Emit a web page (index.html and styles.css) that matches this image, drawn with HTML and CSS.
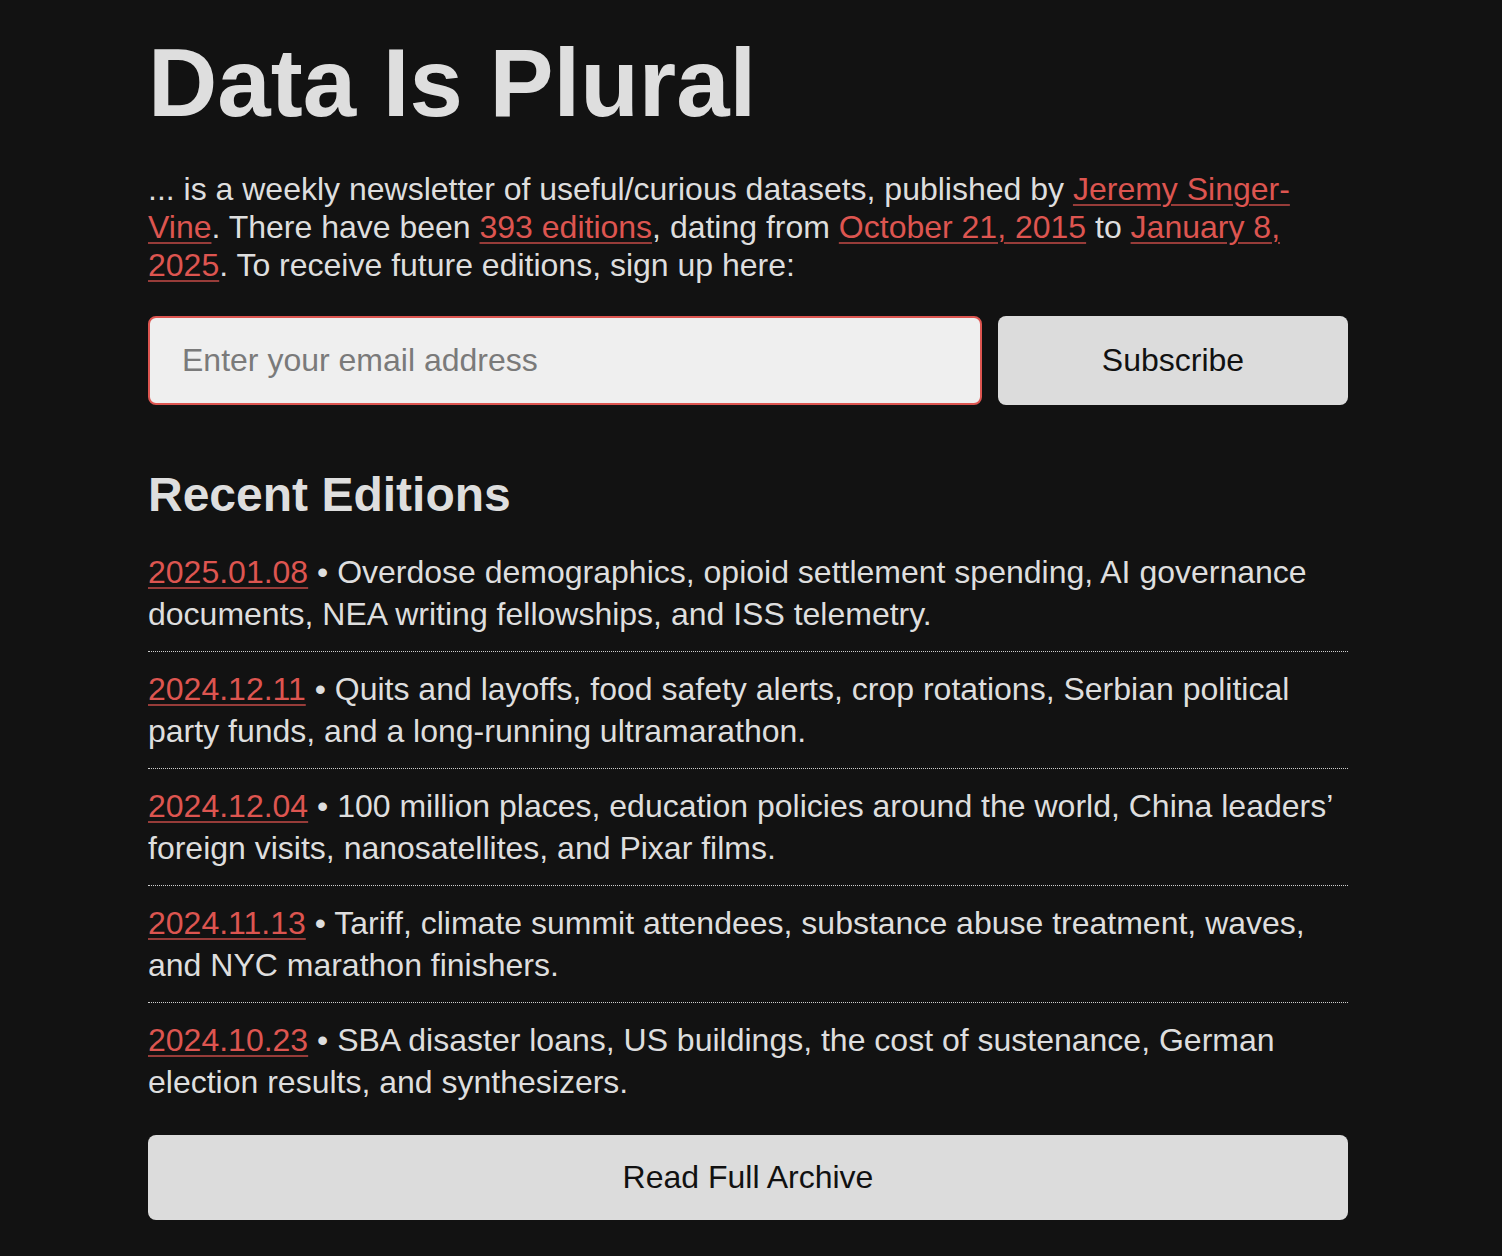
FILE: index.html
```html
<!DOCTYPE html>
<html lang="en">
<head>
<meta charset="utf-8">
<title>Data Is Plural</title>
<link rel="stylesheet" href="styles.css">
</head>
<body>
<main class="page">
  <h1 class="title">Data Is Plural</h1>
  <p class="intro">... is a weekly newsletter of useful/curious datasets, published by <a href="#">Jeremy Singer-Vine</a>. There have been <a href="#">393 editions</a>, dating from <a href="#">October 21, 2015</a> to <a href="#">January 8, 2025</a>. To receive future editions, sign up here:</p>
  <form class="signup">
    <input class="email" type="email" placeholder="Enter your email address">
    <button class="btn subscribe" type="button">Subscribe</button>
  </form>
  <h2 class="section-title">Recent Editions</h2>
  <ul class="editions">
    <li class="edition"><a href="#">2025.01.08</a> • Overdose demographics, opioid settlement spending, AI governance documents, NEA writing fellowships, and ISS telemetry.</li>
    <li class="edition"><a href="#">2024.12.11</a> • Quits and layoffs, food safety alerts, crop rotations, Serbian political party funds, and a long-running ultramarathon.</li>
    <li class="edition"><a href="#">2024.12.04</a> • 100 million places, education policies around the world, China leaders’ foreign visits, nanosatellites, and Pixar films.</li>
    <li class="edition"><a href="#">2024.11.13</a> • Tariff, climate summit attendees, substance abuse treatment, waves, and NYC marathon finishers.</li>
    <li class="edition"><a href="#">2024.10.23</a> • SBA disaster loans, US buildings, the cost of sustenance, German election results, and synthesizers.</li>
  </ul>
  <a class="btn archive" href="#">Read Full Archive</a>
</main>
</body>
</html>
```

FILE: styles.css
```css
html, body {
  margin: 0;
  padding: 0;
  background: #121212;
}

body {
  font-family: "Liberation Sans", Arial, Helvetica, sans-serif;
  color: #dedede;
  font-size: 32px;
}

.page {
  width: 1200px;
  margin-left: 148px;
  padding-top: 30px;
  padding-bottom: 36px;
}

a {
  color: #dd5550;
  text-decoration: underline;
  text-decoration-color: #973c39;
  text-decoration-thickness: 2px;
  text-underline-offset: 4px;
}

.title {
  margin: 0;
  font-size: 96px;
  font-weight: bold;
  line-height: 1.1;
  color: #dedede;
}

.intro {
  margin: 34px 0 0;
  line-height: 38px;
}

.signup {
  display: flex;
  gap: 16px;
  margin-top: 32px;
}

.email {
  flex: 1;
  box-sizing: border-box;
  height: 89px;
  padding: 0 32px;
  border: 2px solid #dd5550;
  border-radius: 8px;
  background: #efefef;
  font-family: inherit;
  font-size: 32px;
  color: #111;
  outline: none;
}

.email::placeholder {
  color: #7a7a7a;
}

.btn {
  box-sizing: border-box;
  border: none;
  border-radius: 8px;
  background: #dcdcdc;
  color: #111;
  font-family: inherit;
  font-size: 32px;
  text-decoration: none;
  display: flex;
  align-items: center;
  justify-content: center;
}

.subscribe {
  width: 350px;
  height: 89px;
}

.section-title {
  margin: 61px 0 0;
  font-size: 48px;
  font-weight: bold;
  line-height: 1.2;
}

.editions {
  list-style: none;
  margin: 12px 0 0;
  padding: 0;
}

.edition {
  padding: 16px 0;
  line-height: 42px;
  border-bottom: 1px dotted #cfcfcf;
}

.edition:last-child {
  border-bottom: none;
}

.archive {
  margin-top: 16px;
  height: 85px;
  width: 100%;
}
```
